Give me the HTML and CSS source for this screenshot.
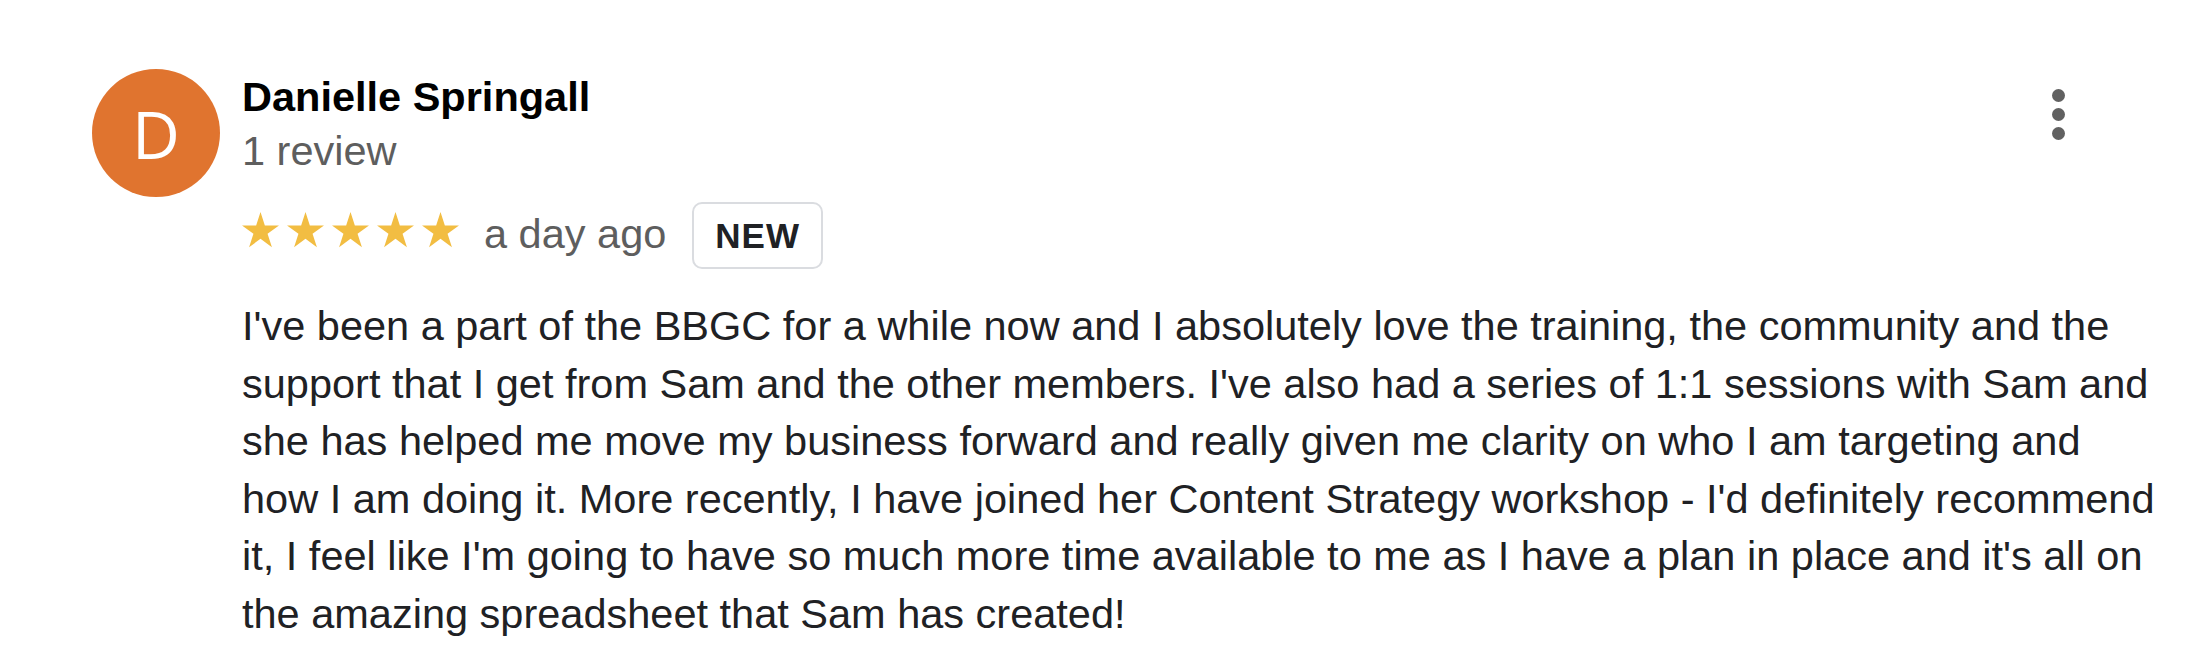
FILE: index.html
```html
<!DOCTYPE html>
<html lang="en">
<head>
<meta charset="utf-8">
<title>Review</title>
<link rel="stylesheet" href="styles.css">
</head>
<body>
<div class="review">
  <div class="avatar">D</div>
  <div class="content">
    <div class="header">
      <div class="author">
        <div class="name">Danielle Springall</div>
        <div class="count">1 review</div>
      </div>
      <button class="more" aria-label="More options">
        <span class="dot"></span><span class="dot"></span><span class="dot"></span>
      </button>
    </div>
    <div class="meta">
      <div class="stars">
        <svg class="star" viewBox="0 0 36 35"><polygon points="18,0 22.24,13.06 35.98,13.06 24.87,21.13 29.11,34.19 18,26.12 6.89,34.19 11.13,21.13 0.02,13.06 13.76,13.06"/></svg>
        <svg class="star" viewBox="0 0 36 35"><polygon points="18,0 22.24,13.06 35.98,13.06 24.87,21.13 29.11,34.19 18,26.12 6.89,34.19 11.13,21.13 0.02,13.06 13.76,13.06"/></svg>
        <svg class="star" viewBox="0 0 36 35"><polygon points="18,0 22.24,13.06 35.98,13.06 24.87,21.13 29.11,34.19 18,26.12 6.89,34.19 11.13,21.13 0.02,13.06 13.76,13.06"/></svg>
        <svg class="star" viewBox="0 0 36 35"><polygon points="18,0 22.24,13.06 35.98,13.06 24.87,21.13 29.11,34.19 18,26.12 6.89,34.19 11.13,21.13 0.02,13.06 13.76,13.06"/></svg>
        <svg class="star" viewBox="0 0 36 35"><polygon points="18,0 22.24,13.06 35.98,13.06 24.87,21.13 29.11,34.19 18,26.12 6.89,34.19 11.13,21.13 0.02,13.06 13.76,13.06"/></svg>
      </div>
      <span class="date">a day ago</span>
      <span class="badge">NEW</span>
    </div>
    <p class="text">I've been a part of the BBGC for a while now and I absolutely love the training, the community and the support that I get from Sam and the other members. I've also had a series of 1:1 sessions with Sam and she has helped me move my business forward and really given me clarity on who I am targeting and how I am doing it. More recently, I have joined her Content Strategy workshop - I'd definitely recommend it, I feel like I'm going to have so much more time available to me as I have a plan in place and it's all on the amazing spreadsheet that Sam has created!</p>
  </div>
</div>
</body>
</html>
```

FILE: styles.css
```css
html, body {
  margin: 0;
  padding: 0;
  background: #ffffff;
}

body {
  font-family: "Liberation Sans", Arial, sans-serif;
  color: #202124;
}

.review {
  display: flex;
  align-items: flex-start;
  padding: 69px 55px 0 92px;
}

.avatar {
  flex: none;
  width: 128px;
  height: 128px;
  border-radius: 50%;
  background: #e0742f;
  color: #ffffff;
  font-family: "Open Sans", Roboto, sans-serif;
  font-size: 66px;
  font-weight: 400;
  display: flex;
  align-items: center;
  justify-content: center;
}

.content {
  flex: 1;
  margin-left: 22px;
  min-width: 0;
}

.header {
  display: flex;
  justify-content: space-between;
  align-items: flex-start;
}

.name {
  font-size: 41.5px;
  font-weight: 700;
  line-height: 55px;
  color: #000000;
}

.count {
  font-size: 41.5px;
  line-height: 53px;
  color: #5e5e5e;
}

.more {
  margin: 20px 84px 0 0;
  padding: 0;
  border: 0;
  background: transparent;
  display: flex;
  flex-direction: column;
  align-items: center;
  gap: 6px;
  width: 26px;
}

.dot {
  display: block;
  width: 13px;
  height: 13px;
  border-radius: 50%;
  background: #616161;
}

.meta {
  display: flex;
  align-items: center;
  margin-top: 25px;
  height: 67px;
}

.stars {
  display: flex;
  gap: 8px;
  margin-bottom: 12px;
}

.star {
  display: block;
  width: 37px;
  height: 36px;
  fill: #f2bd42;
}

.date {
  margin-left: 25px;
  font-size: 41.5px;
  line-height: 46px;
  color: #5e5e5e;
  margin-bottom: 4px;
}

.badge {
  margin-left: 26px;
  box-sizing: border-box;
  height: 67px;
  padding: 0 21px;
  border: 2px solid #dadce0;
  border-radius: 10px;
  display: flex;
  align-items: center;
  font-size: 35px;
  font-weight: 700;
  letter-spacing: 1px;
  color: #202124;
}

.text {
  margin: 28px 0 0 0;
  font-size: 41.5px;
  line-height: 57.5px;
  color: #202124;
}
```
